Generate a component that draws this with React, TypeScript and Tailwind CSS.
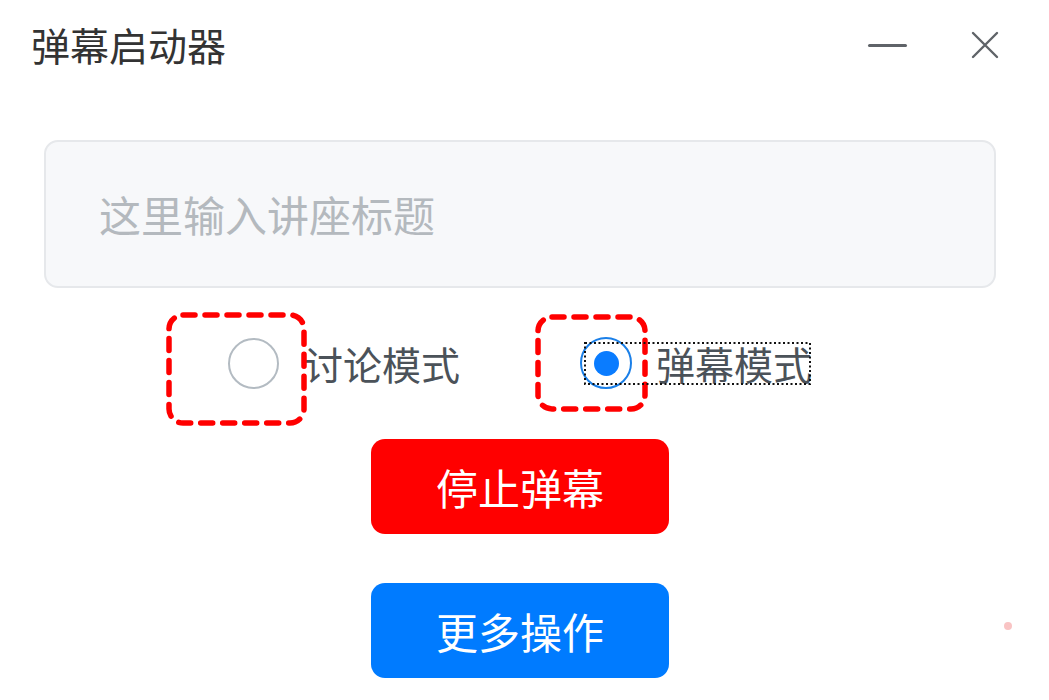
import { Component } from 'react';

const font = { fontFamily: '"Noto Sans CJK SC", "Noto Sans", sans-serif' };

function DashedBox({ w, h }: { w: number; h: number }) {
    return (
        <svg width={w} height={h} className="block">
            <rect
                x={3}
                y={3}
                width={w - 6}
                height={h - 6}
                rx={14}
                fill="none"
                stroke="#ff0000"
                strokeWidth={5.5}
                strokeDasharray="12 10"
                strokeLinecap="round"
            />
        </svg>
    );
}

export class DanmakuLauncher extends Component {
    render() {
        return (
            <div className="w-[1049px] h-[700px] bg-white relative overflow-hidden" style={font}>
                <header className="flex items-center h-[90px] pl-[31px]">
                    <h1 className="text-[39px] leading-none text-[#333333] -mt-[1px]">弹幕启动器</h1>
                    <div className="ml-auto flex items-center">
                        <div className="w-[39px] h-[3px] bg-[#5f6368] rounded-full mr-[64px]" />
                        <svg width="28" height="28" viewBox="0 0 28 28" className="mr-[50px]">
                            <path d="M2 2 L26 26 M26 2 L2 26" stroke="#5f6368" strokeWidth="2.4" strokeLinecap="round" />
                        </svg>
                    </div>
                </header>

                <div className="ml-[44px] mt-[50px] w-[952px] h-[148px] rounded-[14px] bg-[#f7f8fa] border-2 border-[#e6e8eb] flex items-center pl-[53px]">
                    <span className="text-[42px] leading-none text-[#b4b9be]">这里输入讲座标题</span>
                </div>

                <div className="flex items-center h-[70px] mt-[40px] pl-[228px]">
                    <label className="relative flex items-center">
                        <div className="absolute left-[-62px] top-[-26px]">
                            <DashedBox w={141} h={114} />
                        </div>
                        <span className="w-[51px] h-[51px] rounded-full border-[2.5px] border-[#b3bbc2] bg-white" />
                        <span className="ml-[25px] text-[39px] leading-none text-[#4b5259]">讨论模式</span>
                    </label>

                    <label className="relative flex items-center ml-[120px]">
                        <div className="absolute left-[-45px] top-[-23px]">
                            <DashedBox w={113} h={98} />
                        </div>
                        <svg width="228" height="44" className="absolute left-[4px] top-[5px]">
                            <rect x="1" y="1" width="225" height="41" fill="none" stroke="#111" strokeWidth="2" strokeDasharray="2 2.5" />
                        </svg>
                        <span className="w-[52px] h-[52px] rounded-full border-[2.5px] border-[#1a7fe8] bg-white flex items-center justify-center">
                            <span className="w-[25px] h-[25px] rounded-full bg-[#0a7cff]" />
                        </span>
                        <span className="ml-[24px] text-[39px] leading-none text-[#4b5259]">弹幕模式</span>
                    </label>
                </div>

                <div className="flex flex-col gap-[49px] mt-[41px] ml-[371px]">
                    <button className="w-[298px] h-[95px] rounded-[14px] bg-[#ff0000] text-white text-[42px] leading-none flex items-center justify-center">
                        停止弹幕
                    </button>
                    <button className="w-[298px] h-[95px] rounded-[14px] bg-[#007bff] text-white text-[42px] leading-none flex items-center justify-center">
                        更多操作
                    </button>
                </div>

                <div className="absolute left-[1004px] top-[622px] w-[8px] h-[8px] rounded-full bg-[#f9c4c4]" />
            </div>
        );
    }
}

export default function App() {
    return <DanmakuLauncher />;
}
